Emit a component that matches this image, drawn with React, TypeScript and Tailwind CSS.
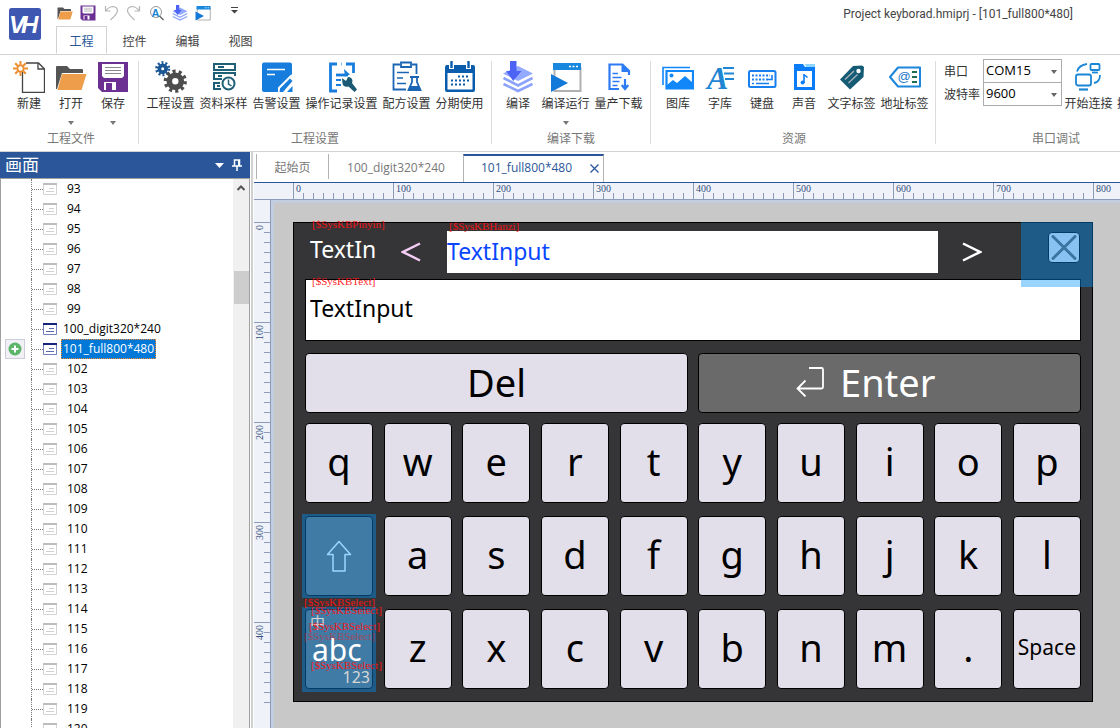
import { useState } from 'react';
import type { ReactNode } from 'react';

const svg32 = 'w-8 h-8 shrink-0';

function Gear({ cx, cy, r, hole, color, width }: { cx: number; cy: number; r: number; hole: number; color: string; width: number }) {
  const tooth = (2 * Math.PI * r) / 20;
  return (
    <g fill="none" stroke={color}>
      <circle cx={cx} cy={cy} r={r} strokeWidth={width} strokeDasharray={`${tooth} ${tooth}`} />
      <circle cx={cx} cy={cy} r={(r + hole) / 2 - 0.5} strokeWidth={r - hole} />
    </g>
  );
}

const FolderArt = () => (
  <>
    <path d="M1 28V6q0-1 1-1h10l3 3h12q1 0 1 1v3H7L2 28z" fill="#555" />
    <path d="M7 13h24.500l-5 16H2.500z" fill="#ee9d4a" />
  </>
);

const SaveArt = () => (
  <>
    <path d="M1 1h30v30H5l-4-4z" fill="#6c2f92" />
    <path d="M5 3h22v12l-2 2H7l-2-2z" fill="#fff" />
    <path d="M8 6.500h16M8 9.500h16M8 12.500h16" stroke="#8a8a8a" />
    <path d="M7 21h12v8h-4v-7H9v7H7z" fill="#fff" />
  </>
);

const BuildArt = () => (
  <>
    <path d="M16 5l15 7.500L16 20 1 12.500z" fill="#93aaff" />
    <g fill="none" stroke="#8ba3fb" strokeWidth="2.600">
      <path d="M1.500 17L16 24.500 30.500 17" />
      <path d="M1.500 23L16 30 30.500 23" />
    </g>
    <path d="M8 0h6.500v10h5L11.200 20 4 10h4z" fill="#4d63f4" />
  </>
);

const RunArt = () => (
  <>
    <path d="M4.500 6v24h26V6" fill="#fff" stroke="#b0b0b0" strokeWidth="2" />
    <path d="M3 2h28v7H3z" fill="#1788dd" />
    <path d="M19 5.500h9" stroke="#fff" strokeWidth="1.500" strokeDasharray="2 1.500" />
    <path d="M1 13l17 9L1 31z" fill="#1379d8" />
  </>
);

const ICONS: Record<string, ReactNode> = {
  new: (
    <>
      <path d="M9.500 11v20.500h22V8l-6-6H13" fill="none" stroke="#444" strokeWidth="1.300" />
      <path d="M25 2v6h6.500" fill="none" stroke="#444" strokeWidth="1.300" />
      <g stroke="#ec8d2f" strokeWidth="2">
        <circle cx="7.500" cy="7.500" r="3.200" fill="#fff" />
        <path d="M7.500 0v3.500M7.500 11.500V15M0 7.500h3.500M11.500 7.500H15M2.200 2.200l2.500 2.500M10.300 10.300l2.500 2.500M2.200 12.800l2.500-2.500M10.300 4.700l2.500-2.500" />
      </g>
    </>
  ),
  open: <FolderArt />,
  save: <SaveArt />,
  gears: (
    <>
      <Gear cx={7.700} cy={7.700} r={5.700} hole={2} color="#1b5794" width={3.600} />
      <Gear cx={20.300} cy={20.200} r={9.300} hole={3.700} color="#4d4d4d" width={4.600} />
    </>
  ),
  sampling: (
    <g fill="none" stroke="#206076" strokeWidth="2">
      <path d="M6 3h21v6H6zM10 6h6" />
      <path d="M14 18H6v-6h21v3M10 15h4" />
      <path d="M13 28H6v-6h6M9 25h3" />
      <circle cx="20.500" cy="22.500" r="6" />
      <path d="M20.500 18.500v4.500l3 2" strokeWidth="1.500" />
    </g>
  ),
  alarm: (
    <>
      <path d="M3 1.500h26q2 0 2 2V15L17 31H3q-2 0-2-2V3.500q0-2 2-2z" fill="#167ddd" />
      <path d="M6 8.500h18M6 13.500h8" stroke="#fff" strokeWidth="1.600" />
      <path d="M31 14L18 27v5" stroke="#fff" strokeWidth="2" fill="none" />
      <path d="M19 28L29 17.500l2.500 2.500L22 31h-3.500z" fill="#167ddd" />
      <path d="M26 31l5.500-6v6z" fill="#167ddd" />
    </>
  ),
  oplog: (
    <>
      <g fill="none" stroke="#167ddd" strokeWidth="2.800">
        <path d="M11 3H4.500v27H11M15 3h0.500M20 3h7.500v9" />
        <path d="M10 14h12" />
      </g>
      <path d="M18 8l6 5.500-5 2z" fill="#167ddd" />
      <path d="M10 19h5M10 24h5" stroke="#167ddd" strokeWidth="2" />
      <path d="M16 17l4 3 2-4q4 0 4.500 4l-.5 2 5 6.500-2.500 2.500-6-5.500q-5 1-6-3z" fill="#1b5a72" />
    </>
  ),
  recipe: (
    <g fill="none" stroke="#1a66b4" strokeWidth="1.800">
      <path d="M9 3.500H2.500v25H15M21 3.500h4.500V13" />
      <path d="M10 1.500h10V6H10z" />
      <path d="M6 11.500h12M6 17h6M6 22.500h9" strokeWidth="1.600" />
      <path d="M19 16h9M21 16v5l-3.500 8h12L26 21v-5" />
      <path d="M19 25h9l1.500 4h-12z" fill="#1a66b4" stroke="none" />
    </g>
  ),
  calendar: (
    <>
      <path d="M2 4h27q2 0 2 2v23q0 2-2 2H3q-2 0-2-2V6z" fill="#0a5cad" />
      <path d="M3.500 12h25v16.500h-25z" fill="#fff" />
      <path d="M5 0h5v8H5zM22 0h5v8h-5z" fill="#fff" />
      <path d="M7.500 0v7M24.500 0v7" stroke="#0a5cad" strokeWidth="2.400" />
      <path d="M14 15.500h12M7 19.500h19M7 23.500h15" stroke="#0a5cad" strokeWidth="1.800" strokeDasharray="2 2" />
    </>
  ),
  build: <BuildArt />,
  run: <RunArt />,
  download: (
    <>
      <path d="M26 14V10l-6.500-6.500h-13V28H16" fill="none" stroke="#2d7bf4" strokeWidth="2.200" />
      <path d="M18.500 3v8H27" fill="#2d7bf4" />
      <path d="M9.500 12.500H15M9.500 16.500h9M9.500 20.500h7M9.500 24.500h5" stroke="#2d7bf4" strokeWidth="1.600" />
      <path d="M22 18v9M18.800 24l3.200 4 3.200-4" fill="none" stroke="#2d7bf4" strokeWidth="2.200" />
    </>
  ),
  image: (
    <g fill="none" stroke="#1187fa" strokeWidth="2">
      <path d="M1 24V6.500h27" strokeWidth="1.600" />
      <path d="M4.500 10h26.500v17.500H4.500z" strokeWidth="2.200" />
      <path d="M5 24l6-5 4 3 8-7 8 7v6H5z" fill="#1187fa" stroke="none" />
      <circle cx="9.500" cy="14.500" r="2" fill="#1187fa" stroke="none" />
    </g>
  ),
  font: (
    <>
      <path d="M19 7h11M20 12.500h10M21 18h9" stroke="#1e86d2" strokeWidth="2" />
      <text x="3" y="28" fontFamily="Liberation Serif, serif" fontSize="32" fontWeight="bold" fontStyle="italic" fill="#1e86d2">A</text>
    </>
  ),
  keyboard: (
    <>
      <rect x="3" y="10" width="26.500" height="16" rx="1.500" fill="none" stroke="#187ff0" strokeWidth="2" />
      <path d="M6 14.500h18M6 18.500h16" stroke="#187ff0" strokeWidth="1.800" strokeDasharray="2 1.500" />
      <path d="M6 22.500h2M10 22.500h13M22 18.500h4V14" stroke="#187ff0" strokeWidth="1.600" fill="none" />
    </>
  ),
  sound: (
    <>
      <path d="M6 3h9l2 3h10v23H6z" fill="#0b7cf8" />
      <path d="M17 3h10v3H18z" fill="#8fd6ff" />
      <path d="M9 10h15v16H9z" fill="#fff" />
      <path d="M16 13v9M16 13.500l3.500 3" stroke="#0b7cf8" strokeWidth="1.600" />
      <circle cx="14.600" cy="21.500" r="2" fill="#0b7cf8" />
    </>
  ),
  tag: (
    <>
      <path d="M17 5l9-.5 2 1.500-.5 10L14 28.500 4 18.500z" fill="#165b74" />
      <circle cx="22.500" cy="10" r="2.200" fill="#fff" />
      <path d="M9 18.500l9-8.500M12.500 22l9-8.500" stroke="#a9b4bb" strokeWidth="1.300" />
    </>
  ),
  address: (
    <>
      <path d="M1 16L9 6.500h22V25.500H9z" fill="#fff" stroke="#1c86dc" strokeWidth="2" strokeLinejoin="round" />
      <text x="8.500" y="20" fontFamily="Liberation Sans, sans-serif" fontSize="13" fill="#1c78c8">@</text>
      <path d="M23 11h5M23 16h5M23 21h5" stroke="#1d6d52" strokeWidth="2.200" />
    </>
  ),
  connect: (
    <g fill="none" stroke="#1a86d6" strokeWidth="1.800">
      <rect x="3" y="13.500" width="15" height="11" rx="2" />
      <path d="M6 28.500h9" strokeWidth="2.200" />
      <rect x="17.500" y="3" width="9" height="6" rx="1" />
      <path d="M19 11.500h6" />
      <path d="M4 10.500Q6 4 14 3M27 14q0 7-6 8" />
    </g>
  ),
};

const CaretDown = ({ className = '' }: { className?: string }) => (
  <svg viewBox="0 0 8 4" className={`w-2 h-1 ${className}`}><path d="M1 0h6L4 4z" fill="currentColor" /></svg>
);

interface Tool {
  icon: string;
  label: string;
  menu?: boolean;
}

const GROUPS: { title: string; pad: string; tools: Tool[] }[] = [
  {
    title: '工程文件',
    pad: 'pl-2 pr-1',
    tools: [
      { icon: 'new', label: '新建' },
      { icon: 'open', label: '打开', menu: true },
      { icon: 'save', label: '保存', menu: true },
    ],
  },
  {
    title: '工程设置',
    pad: 'px-[5px]',
    tools: [
      { icon: 'gears', label: '工程设置' },
      { icon: 'sampling', label: '资料采样' },
      { icon: 'alarm', label: '告警设置' },
      { icon: 'oplog', label: '操作记录设置' },
      { icon: 'recipe', label: '配方设置' },
      { icon: 'calendar', label: '分期使用' },
    ],
  },
  {
    title: '编译下载',
    pad: 'px-[5px]',
    tools: [
      { icon: 'build', label: '编译' },
      { icon: 'run', label: '编译运行', menu: true },
      { icon: 'download', label: '量产下载' },
    ],
  },
  {
    title: '资源',
    pad: 'pl-1.5 pr-1',
    tools: [
      { icon: 'image', label: '图库' },
      { icon: 'font', label: '字库' },
      { icon: 'keyboard', label: '键盘' },
      { icon: 'sound', label: '声音' },
      { icon: 'tag', label: '文字标签' },
      { icon: 'address', label: '地址标签' },
    ],
  },
];

function ToolButton({ icon, label, menu }: Tool) {
  const width = label.length > 4 ? 'w-[77px]' : label.length > 2 ? 'w-[53px]' : 'w-[42px]';
  return (
    <button className={`${width} h-[70px] flex flex-col items-center shrink-0 whitespace-nowrap hover:bg-[#e6eef8]`}>
      <svg viewBox="0 0 32 32" className={svg32}>{ICONS[icon]}</svg>
      <span className="h-[22px] leading-[22px]">{label}</span>
      {menu && <CaretDown className="mt-1.5 text-[#777]" />}
    </button>
  );
}

function Group({ title, pad, children }: { title: string; pad: string; children: ReactNode }) {
  return (
    <div className={`flex flex-col shrink-0 border-r border-[#dcdcdc] ${pad}`}>
      <div className="flex">{children}</div>
      <div className="h-[14px] leading-4 text-center text-[#777]">{title}</div>
    </div>
  );
}

function Combo({ id, value, options }: { id: string; value: string; options: string[] }) {
  return (
    <div className="relative">
      <select id={id} defaultValue={value} className="appearance-none w-[79px] h-6 -mt-px border border-[#ababab] bg-white pl-[2px] text-[13px] text-black block">
        {options.map((o) => <option key={o}>{o}</option>)}
      </select>
      <CaretDown className="absolute right-1 top-[10px] text-[#666] pointer-events-none" />
    </div>
  );
}

const QUICK: { label: string; art: ReactNode }[] = [
  { label: '打开', art: <FolderArt /> },
  { label: '保存', art: <SaveArt /> },
  { label: '撤销', art: <path d="M5 2v10h10M5 12Q12 3 20 3q9 1 9 9 0 5-14 18" fill="none" stroke="#b5b5b5" strokeWidth="2.400" /> },
  { label: '重做', art: <path d="M27 2v10H17M27 12Q20 3 12 3 3 4 3 12q0 5 14 18" fill="none" stroke="#b5b5b5" strokeWidth="2.400" /> },
  {
    label: '查找',
    art: (
      <>
        <circle cx="14" cy="14" r="11" fill="none" stroke="#999" strokeWidth="2" />
        <path d="M21 22l8 8" stroke="#666" strokeWidth="3" />
        <text x="5" y="23" fontFamily="Liberation Sans, sans-serif" fontWeight="bold" fontSize="22" fill="#1a86d6">A</text>
      </>
    ),
  },
  { label: '编译', art: <BuildArt /> },
  { label: '运行', art: <RunArt /> },
];

const MENU_TABS = ['工程', '控件', '编辑', '视图'];

function Header() {
  const [tab, setTab] = useState('工程');
  return (
    <header className="flex h-[55px] shrink-0 border-b border-[#d2d2d2]">
      <svg viewBox="0 0 32 32" className="w-8 h-8 ml-[9px] mt-2 shrink-0" role="img" aria-label="VH">
        <rect width="32" height="32" rx="2.500" fill="#3e57b0" />
        <g fontFamily="Liberation Sans, sans-serif" fontSize="24" fontWeight="bold" fontStyle="italic" fill="#fff">
          <text x="0" y="25">V</text>
          <text x="12" y="25">H</text>
        </g>
      </svg>
      <div className="flex-1 flex flex-col min-w-0 ml-[15px]">
        <div className="h-[27px] flex items-center justify-between pr-[47px]">
          <div className="flex items-center gap-[7px] pl-px">
            {QUICK.map((q) => (
              <button key={q.label} aria-label={q.label} className="w-4 h-4">
                <svg viewBox="0 0 32 32" className="w-4 h-4">{q.art}</svg>
              </button>
            ))}
            <button aria-label="自定义" className="w-4 h-4 ml-2 flex justify-center items-start pt-0.5">
              <svg viewBox="0 0 9 7" className="w-[9px] h-[7px]"><path d="M1 .5h7" stroke="#444" /><path d="M1 3h7L4.500 6.500z" fill="#444" /></svg>
            </button>
          </div>
          <h1 className="text-[#444] whitespace-nowrap pt-0.5 font-['Roboto',sans-serif]">Project keyborad.hmiprj - [101_full800*480]</h1>
        </div>
        <nav className="flex h-7 gap-0.5">
          {MENU_TABS.map((t) => (
            <button
              key={t}
              onClick={() => setTab(t)}
              className={`w-[51px] h-7 pt-1 border ${t === tab ? 'bg-white border-[#d2d2d2] border-b-white text-[#2b579a]' : 'border-transparent text-[#444]'}`}
            >
              {t}
            </button>
          ))}
        </nav>
      </div>
    </header>
  );
}

function Ribbon() {
  return (
    <div className="h-[97px] shrink-0 flex pt-1.5 pb-[7px] overflow-hidden border-b border-[#d2d2d2] text-[#333]">
      {GROUPS.map((g) => (
        <Group key={g.title} title={g.title} pad={g.pad}>
          {g.tools.map((t) => <ToolButton key={t.label} {...t} />)}
        </Group>
      ))}
      <Group title="串口调试" pad="pl-2 pr-1">
        <div className="grid grid-cols-[39px_79px] auto-rows-[23px] items-center -mt-px">
          <label htmlFor="port">串口</label>
          <Combo id="port" value="COM15" options={['COM1', 'COM15']} />
          <label htmlFor="baud" className="whitespace-nowrap">波特率</label>
          <Combo id="baud" value="9600" options={['9600', '115200']} />
        </div>
        <ToolButton icon="connect" label="开始连接" />
        <button className="w-[53px] h-[70px] shrink-0 flex flex-col items-start pl-0.5">
          <span className="h-8" />
          <span className="h-[22px] leading-[22px]">接</span>
        </button>
      </Group>
    </div>
  );
}

const PAGES = Array.from({ length: 28 }, (_, i) => 93 + i).map((n) => ({
  n,
  name: n === 100 ? '100_digit320*240' : n === 101 ? '101_full800*480' : String(n),
  used: n === 100 || n === 101,
}));

function PageIcon({ used }: { used: boolean }) {
  return (
    <svg viewBox="0 0 14 12" className="w-[14px] h-3 shrink-0">
      <path d="M.5 2v9.500h13V2" fill="#fff" stroke={used ? '#7280bb' : '#d4d4d4'} />
      <path d="M0 0h14v2H0z" fill={used ? '#16247c' : '#bdbdbd'} />
      <path d="M6 5.500h5M3 8.500h8" stroke={used ? '#5a6ab0' : '#d0d0d0'} />
    </svg>
  );
}

function Sidebar() {
  const [selected, setSelected] = useState(101);
  return (
    <aside className="w-[250px] shrink-0 flex flex-col min-h-0">
      <div className="h-[26px] shrink-0 bg-[#2b579a] text-white flex items-center pl-[5px] pr-2 gap-2">
        <h2 className="text-[17px] flex-1">画面</h2>
        <button aria-label="菜单"><svg viewBox="0 0 9 5" className="w-[9px] h-[5px]"><path d="M0 0h9L4.500 5z" fill="#fff" /></svg></button>
        <button aria-label="固定">
          <svg viewBox="0 0 10 12" className="w-[10px] h-3"><path d="M2.500 7V1h5v6M0 7h10M5 7v5" fill="none" stroke="#fff" strokeWidth="1.500" /><path d="M6 1h1.500v6H6z" fill="#fff" /></svg>
        </button>
      </div>
      <div className="flex-1 flex min-h-0 border-x border-t border-[#a0a0a0]">
        <ul className="flex-1 overflow-hidden text-[12px] text-black">
          {PAGES.map((p) => (
            <li key={p.n} className="h-5 flex items-center">
              <div className="w-[30px] pl-1 shrink-0">
                {p.n === 101 && (
                  <button aria-label="添加" className="w-5 h-5 flex items-center justify-center bg-[#f0f0f5] border border-[#ccccdc]">
                    <svg viewBox="0 0 14 14" className="w-[14px] h-[14px]"><circle cx="7" cy="7" r="6.500" fill="#5cb568" /><path d="M7 3.500v7M3.500 7h7" stroke="#fff" strokeWidth="2" /></svg>
                  </button>
                )}
              </div>
              <div className="w-3 h-5 shrink-0 border-l border-dotted border-[#777] pt-[10px]">
                <div className="border-t border-dotted border-[#777]" />
              </div>
              <PageIcon used={p.used} />
              <button
                onClick={() => setSelected(p.n)}
                className={`h-5 leading-4 px-px border ml-1 ${p.n === selected ? 'bg-[#0078d7] text-white border-dotted border-[#ff8728]' : 'border-transparent'} ${p.used ? '' : 'pl-[5px]'}`}
              >
                {p.name}
              </button>
            </li>
          ))}
        </ul>
        <div className="w-4 bg-[#f0f0f0] shrink-0 flex flex-col items-center">
          <svg viewBox="0 0 8 6" className="w-2 h-1.5 mt-[6px]"><path d="M.5 5L4 1.500 7.500 5" fill="none" stroke="#555" strokeWidth="2" /></svg>
          <div className="w-[15px] h-[33px] mt-20 bg-[#cdcdcd]" />
        </div>
      </div>
    </aside>
  );
}

function DocTabs() {
  return (
    <div className="h-[31px] shrink-0 flex border-b border-[#2b579a] pl-0.5 pt-0.5 text-[12px] text-[#777]">
      <button className="h-[25px] w-[73px] border-x border-[#b4b4b4] pt-0.5">起始页</button>
      <button className="h-[25px] w-[134px] pt-0.5">100_digit320*240</button>
      <div className="w-[141px] h-7 border-t-2 border-t-[#2b579a] border-x border-x-[#b4b4b4] flex items-center justify-between pl-[17px] pr-1 pb-0.5 text-[#2b579a]">
        <button>101_full800*480</button>
        <button aria-label="关闭"><svg viewBox="0 0 9 9" className="w-[9px] h-[9px]"><path d="M.5.5l8 8M8.500.5l-8 8" stroke="#2b579a" strokeWidth="1.300" /></svg></button>
      </div>
    </div>
  );
}

const TICKS = Array.from({ length: 10 }, (_, i) => i);

function HorizontalRuler() {
  return (
    <div className="h-[17px] shrink-0 flex bg-[#f0f2f9] pl-[39px] overflow-hidden border-b border-[#8c9cb8]">
      {[0, 100, 200, 300, 400, 500, 600, 700, 800].map((n) => (
        <div key={n} className="relative w-[100px] shrink-0 flex items-end">
          {TICKS.map((t) => (
            (n < 800 || t === 0) && <div key={t} className={`w-[10px] border-l border-[#8c9cb8] ${t === 0 ? 'h-4' : 'h-1.5'}`} />
          ))}
          <span className="absolute left-[3px] top-0 leading-3 text-[10px] text-[#33507c] font-['Liberation_Serif',serif]">{n}</span>
        </div>
      ))}
    </div>
  );
}

function VerticalRuler() {
  return (
    <div className="w-[17px] shrink-0 bg-[#f0f2f9] pt-[22px] overflow-hidden border-r border-[#8c9cb8]">
      {[0, 100, 200, 300, 400].map((n) => (
        <div key={n} className="relative h-[100px] flex flex-col items-end">
          {TICKS.map((t) => (
            (n < 400 || t < 9) && <div key={t} className={`h-[10px] border-t border-[#8c9cb8] ${t === 0 ? 'w-4' : 'w-1.5'}`} />
          ))}
          <span className="absolute left-0 top-[3px] leading-3 text-[10px] text-[#33507c] [writing-mode:vertical-rl] rotate-180 font-['Liberation_Serif',serif]">{n}</span>
        </div>
      ))}
    </div>
  );
}

const LIGHT_KEY = 'bg-[#e2dfea] text-black border border-black rounded-[4px]';
const DARK_KEY = 'bg-[#6a6a6a] text-white border border-black rounded-[4px]';
const TINT = 'absolute bg-[#0096ff]/40 pointer-events-none';

// address tags of the system registers, drawn over the widgets
const TAGS = [
  { text: '[$SysKBPinyin]', pos: 'left-[18px] top-[-7px]' },
  { text: '[$SysKBHanzi]', pos: 'left-[155px] top-[-5px]' },
  { text: '[$SysKBText]', pos: 'left-[18px] top-[50px]' },
  { text: '[$SysKBSelect]', pos: 'left-[10px] top-[371px]' },
  { text: '[$SysKBSelect]', pos: 'left-[17px] top-[379px]' },
  { text: '[$SysKBSelect]', pos: 'left-[15px] top-[395px]' },
  { text: '[$SysKBSelect]', pos: 'left-[10px] top-[405px] opacity-50' },
  { text: '[$SysKBSelect]', pos: 'left-[17px] top-[434px]' },
];

function Key({ children }: { children: string }) {
  return <button className={`${LIGHT_KEY} w-[68px] h-20 ${children === 'Space' ? 'text-[21px]' : 'text-[38px]'} leading-none pb-1`}>{children}</button>;
}

function Screen() {
  return (
    <div className="relative w-[800px] h-[480px] shrink-0 bg-[#353537] border border-black px-[11px] font-['Noto_Sans',sans-serif]">
      <div className="h-14 flex items-center text-white pl-[5px] pr-[143px] pt-0.5">
        <span className="w-[91px] text-[23px] pb-1.5">TextIn</span>
        <button aria-label="上一个" className="w-5 text-[#f3cdf5]"><svg viewBox="0 0 20 20" className="w-5 h-5"><path d="M19 1.500L2 10l17 8.500" fill="none" stroke="currentColor" strokeWidth="2.500" /></svg></button>
        <input aria-label="候选" defaultValue="TextInput" className="ml-[26px] flex-1 min-w-0 h-[42px] pb-0.5 bg-white text-[#0846ff] text-[23px]" />
      </div>
      <input aria-label="文本" defaultValue="TextInput" className="block w-full h-[62px] bg-white border border-black px-1 pb-1 text-[23px] text-black" />
      <div className="grid grid-cols-2 gap-[10px] mt-3">
        <button className={`${LIGHT_KEY} h-[60px] text-[38px] leading-none pb-0.5`}>Del</button>
        <button className={`${DARK_KEY} h-[60px] text-[38px] leading-none flex items-center pl-[97px] pb-0.5 gap-4`}>
          <svg viewBox="0 0 28 30" className="w-7 h-[30px]"><path d="M13 1h12.500q1.500 0 1.500 1.500V20q0 1.500-1.500 1.500H1.500M9.500 13.500l-8 8 8 8" fill="none" stroke="#fff" strokeWidth="1.800" /></svg>
          Enter
        </button>
      </div>
      <div className="flex justify-between mt-[10px]">
        {[...'qwertyuiop'].map((k) => <Key key={k}>{k}</Key>)}
      </div>
      <div className="flex justify-between mt-[13px]">
        <button aria-label="Shift" className={`${DARK_KEY} w-[68px] h-20 flex items-center justify-center`}>
          <svg viewBox="0 0 26 32" className="w-[26px] h-8"><path d="M13 1.500L1.500 14.500H7V31h12V14.500h5.500z" fill="none" stroke="#fff" strokeWidth="1.500" strokeLinejoin="round" /></svg>
        </button>
        {[...'asdfghjkl'].map((k) => <Key key={k}>{k}</Key>)}
      </div>
      <div className="flex justify-between mt-[13px]">
        <button className={`${DARK_KEY} w-[68px] h-20`}>
          <span className="relative z-10 flex flex-col h-full pl-1 pr-0.5">
            <span className="text-left text-[15px] leading-6 h-6 text-[#d6d6d6] font-['Noto_Sans_CJK_SC',sans-serif]">中</span>
            <span className="text-[30px] leading-8 h-8 text-left pl-0.5">abc</span>
            <span className="text-right text-[16px] leading-[22px] text-[#d6d6d6]">123</span>
          </span>
        </button>
        {[...'zxcvbnm.', 'Space'].map((k) => <Key key={k}>{k}</Key>)}
      </div>
      <button aria-label=">" className="absolute left-[668px] top-[19px]">
        <svg viewBox="0 0 20 20" className="w-5 h-5"><path d="M1 1.500L18 10 1 18.500" fill="none" stroke="#fff" strokeWidth="2.500" /></svg>
      </button>
      <button aria-label="关闭键盘" className={`${LIGHT_KEY} absolute left-[754px] top-[9px] w-8 h-[31px] p-0.5`}>
        <svg viewBox="0 0 26 26" className="w-[26px] h-[25px]"><path d="M1.500 1.500l23 23M24.500 1.500l-23 23" stroke="#5f5f62" strokeWidth="3" strokeLinecap="round" /></svg>
      </button>
      <div className={`${TINT} left-[727px] top-[-1px] w-[72px] h-[65px]`} />
      <div className={`${TINT} left-[8px] top-[291px] w-[74px] h-[84px]`} />
      <div className={`${TINT} left-[8px] top-[384px] w-[74px] h-[85px]`} />
      {TAGS.map((t, i) => (
        <span key={i} className={`absolute z-20 leading-4 text-[11px] text-[#ff1010]/95 pointer-events-none whitespace-nowrap font-['Liberation_Serif',serif] ${t.pos}`}>{t.text}</span>
      ))}
    </div>
  );
}

export default function App() {
  return (
    <div className="h-screen flex flex-col bg-white overflow-hidden text-[12px] font-['Open_Sans','Noto_Sans_CJK_SC',sans-serif]">
      <Header />
      <Ribbon />
      <div className="flex-1 flex min-h-0">
        <Sidebar />
        <main className="flex-1 min-w-0 ml-px border-l-2 border-[#d0d0d0] flex flex-col pl-px">
          <DocTabs />
          <HorizontalRuler />
          <div className="flex-1 flex min-h-0">
            <VerticalRuler />
            <div className="flex-1 min-w-0 overflow-hidden bg-[#c8c8c8] border-l-[3px] border-t-[3px] border-[#c3cde0] pl-[19px] pt-[19px]">
              <Screen />
            </div>
          </div>
        </main>
      </div>
    </div>
  );
}
